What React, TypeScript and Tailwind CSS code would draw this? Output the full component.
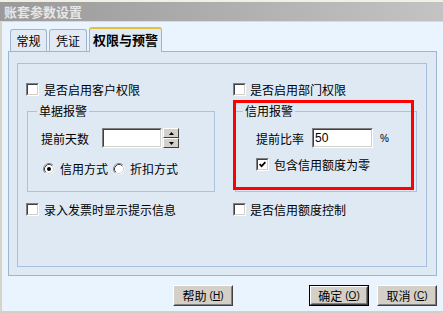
import React from "react";

function Check({ checked }: { checked?: boolean }) {
  return (
    <span className="flex w-[13px] h-[13px] shrink-0 border border-t-[#808080] border-l-[#808080] border-r-white border-b-white">
      <span className="flex flex-1 items-center justify-center border border-t-[#404040] border-l-[#404040] border-r-[#d4d0c8] border-b-[#d4d0c8] bg-white">
        {checked && (
          <svg width="7" height="7" viewBox="0 0 7 7">
            <path d="M0.6 3.2 L2.6 5.2 L6.4 1.2" fill="none" stroke="#000" strokeWidth="1.7" />
          </svg>
        )}
      </span>
    </span>
  );
}

function Radio({ checked }: { checked?: boolean }) {
  return (
    <svg width="12" height="12" viewBox="0 0 12 12" className="shrink-0">
      <circle cx="6" cy="6" r="5.5" fill="#ffffff" />
      <path d="M2.11 9.89 A5.5 5.5 0 0 1 9.89 2.11" fill="none" stroke="#808080" strokeWidth="1" />
      <path d="M2.82 9.18 A4.5 4.5 0 0 1 9.18 2.82" fill="none" stroke="#404040" strokeWidth="1" />
      <path d="M9.18 2.82 A4.5 4.5 0 0 1 2.82 9.18" fill="none" stroke="#d4d0c8" strokeWidth="1" />
      {checked && <circle cx="6" cy="6" r="2" fill="#000" />}
    </svg>
  );
}

function Input({ value, w }: { value?: string; w: string }) {
  return (
    <span className={w + " h-[20px] shrink-0 block border border-t-[#808080] border-l-[#808080] border-r-white border-b-white"}>
      <span className="block h-full border border-t-[#404040] border-l-[#404040] border-r-[#d4d0c8] border-b-[#d4d0c8] bg-white text-[12px] leading-[16px] pl-[1px] font-['Liberation_Sans',sans-serif]">
        {value}
      </span>
    </span>
  );
}

function SpinBtn({ up }: { up?: boolean }) {
  return (
    <span className="flex h-[10px] w-[16px] items-center justify-center border border-t-white border-l-white border-r-[#404040] border-b-[#404040] bg-[#d4d0c8]">
      <svg width="5" height="3" viewBox="0 0 5 3">
        {up ? <path d="M0 3 L2.5 0 L5 3Z" fill="#000" /> : <path d="M0 0 L2.5 3 L5 0Z" fill="#000" />}
      </svg>
    </span>
  );
}

function Btn({ label, k, def }: { label: string; k: string; def?: boolean }) {
  return (
    <div className={def ? "w-[60px] h-[21px] border border-black" : "w-[60px] h-[21px]"}>
      <div className="h-full border border-t-white border-l-white border-r-[#404040] border-b-[#404040] bg-[#d4d0c8]">
        <div className="h-full flex items-center justify-center border border-transparent border-r-[#808080] border-b-[#808080] text-[12px] leading-[13px] text-black">
          <span>{label}</span>
          <span className="ml-[3px] text-[10px] font-['Liberation_Sans',sans-serif]">
            (<span className="underline">{k}</span>)
          </span>
        </div>
      </div>
    </div>
  );
}

export default function App() {
  return (
    <div className="w-[443px] h-[313px] flex flex-col overflow-hidden bg-[#f2efe4] pt-[2px] font-['Noto_Sans_CJK_SC','Liberation_Sans',sans-serif] text-black">
      <div className="h-[19px] shrink-0 flex items-center pl-[4px] bg-gradient-to-r from-[#9a9a9a] to-[#c3c3c3]">
        <span className="text-[13px] leading-[14px] font-bold text-[#e6e6e6]">账套参数设置</span>
      </div>
      <div className="h-[1px] shrink-0 bg-[#dedad0]" />
      <div className="flex-1 flex flex-col bg-[#eaf4fe] border-l-2 border-l-[#d6d3c8] border-b-2 border-b-[#d4d0c8] pt-[5px]">
        {/* tabs */}
        <div className="ml-[6px] flex items-end h-[24px] pl-[2px] gap-[2px] relative z-10">
          <div className="h-[22px] w-[37px] flex items-center justify-center rounded-t-[3px] border border-b-0 border-[#9fb5cd] bg-[#e2ebf5] text-[12px] leading-[13px]">
            常规
          </div>
          <div className="h-[22px] w-[38px] flex items-center justify-center rounded-t-[3px] border border-b-0 border-[#9fb5cd] bg-[#e2ebf5] text-[12px] leading-[13px]">
            凭证
          </div>
          <div className="h-[25px] -mb-[1px] w-[73px] flex items-center justify-center rounded-t-[3px] border border-b-0 border-[#9fb5cd] border-t-2 border-t-[#e2bf3c] bg-[#dfe9f3] text-[13px] leading-[14px] font-bold pb-[1px]">
            权限与预警
          </div>
        </div>
        {/* panel */}
        <div className="ml-[6px] w-[429px] h-[225px] shrink-0 border border-[#9fb5cd] bg-[#dfe9f3] pt-[11px] pl-[8px]">
          <div className="w-[410px] h-[204px] border border-[#a7c0de] pl-[8px] pr-[9px] pt-[19px]">
            <div className="grid grid-cols-[189px_184px] gap-x-[18px] text-[12px] leading-[13px]">
              {/* row 1 */}
              <div className="flex items-center gap-[5px] h-[13px]">
                <Check />
                <span>是否启用客户权限</span>
              </div>
              <div className="flex items-center gap-[4px] h-[13px]">
                <Check />
                <span>是否启用部门权限</span>
              </div>
              {/* row 2 */}
              <fieldset className="mt-[9px] ml-[1px] border border-[#a9c3e0] pb-[16px]">
                <legend className="ml-[9px] px-[2px] leading-[12px]">单据报警</legend>
                <div className="mt-[11px] flex items-center h-[20px] pl-[13px]">
                  <span className="w-[61px]">提前天数</span>
                  <Input w="w-[60px]" />
                  <span className="ml-[1px] flex flex-col">
                    <SpinBtn up />
                    <SpinBtn />
                  </span>
                </div>
                <div className="mt-[14px] flex items-center h-[13px] pl-[15px]">
                  <Radio checked />
                  <span className="ml-[5px]">信用方式</span>
                  <span className="ml-[5px]">
                    <Radio />
                  </span>
                  <span className="ml-[5px]">折扣方式</span>
                </div>
              </fieldset>
              <div className="relative mt-[9px] ml-[2px] flex">
                <fieldset className="flex-1 border border-[#a9c3e0] pb-[20px]">
                  <legend className="ml-[7px] px-[2px] leading-[12px]">信用报警</legend>
                  <div className="mt-[11px] flex items-center h-[20px] pl-[20px]">
                    <span className="w-[56px]">提前比率</span>
                    <Input w="w-[61px]" value="50" />
                    <span className="ml-[7px] text-[10px] font-['Liberation_Sans',sans-serif]">%</span>
                  </div>
                  <div className="mt-[10px] flex items-center h-[13px] pl-[20px] gap-[5px]">
                    <Check checked />
                    <span>包含信用额度为零</span>
                  </div>
                </fieldset>
                <div className="absolute left-[-2px] top-[-5px] w-[181px] h-[90px] border-[3px] border-[#ff0000] pointer-events-none" />
              </div>
              {/* row 3 */}
              <div className="mt-[11px] flex items-center gap-[5px] h-[13px]">
                <Check />
                <span>录入发票时显示提示信息</span>
              </div>
              <div className="mt-[11px] flex items-center gap-[4px] h-[13px]">
                <Check />
                <span>是否信用额度控制</span>
              </div>
            </div>
          </div>
        </div>
        {/* buttons */}
        <div className="mt-[9px] flex">
          <div className="ml-[171px]">
            <Btn label="帮助" k="H" />
          </div>
          <div className="ml-[76px]">
            <Btn label="确定" k="O" def />
          </div>
          <div className="ml-[8px]">
            <Btn label="取消" k="C" />
          </div>
        </div>
      </div>
    </div>
  );
}
